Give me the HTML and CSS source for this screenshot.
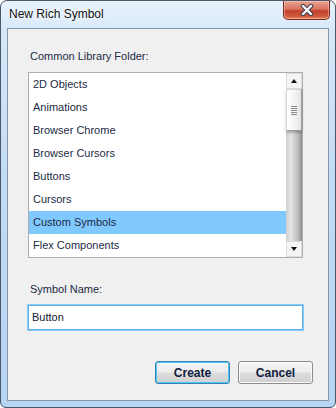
FILE: index.html
```html
<!DOCTYPE html>
<html lang="en">
<head>
    <meta charset="UTF-8">
    <title>New Rich Symbol</title>
    <link rel="stylesheet" href="styles.css">
</head>
<body>
    <div class="window">
        <div class="titlebar">
            <span class="title">New Rich Symbol</span>
            <div class="close">
                <svg width="14" height="12" viewBox="0 0 14 12">
                    <path d="M3 2 L11 10 M11 2 L3 10" stroke="#3b3f52" stroke-width="4.4" stroke-linecap="round"/>
                    <path d="M3 2 L11 10 M11 2 L3 10" stroke="#ffffff" stroke-width="2.4" stroke-linecap="round"/>
                </svg>
            </div>
        </div>

        <div class="client">
            <div class="label">Common Library Folder:</div>

            <div class="listbox">
                <ul class="items">
                    <li>2D Objects</li>
                    <li>Animations</li>
                    <li>Browser Chrome</li>
                    <li>Browser Cursors</li>
                    <li>Buttons</li>
                    <li>Cursors</li>
                    <li class="selected">Custom Symbols</li>
                    <li>Flex Components</li>
                </ul>
                <div class="scrollbar">
                    <div class="arrow"><span class="tri up"></span></div>
                    <div class="thumb">
                        <span class="grip"></span>
                    </div>
                    <div class="track"></div>
                    <div class="arrow"><span class="tri down"></span></div>
                </div>
            </div>

            <div class="label second">Symbol Name:</div>
            <div class="input">Button</div>

            <div class="buttons">
                <button class="btn default">Create</button>
                <button class="btn">Cancel</button>
            </div>
        </div>
    </div>
</body>
</html>
```

FILE: styles.css
```css
body {
    margin: 0;
    width: 336px;
    height: 408px;
    overflow: hidden;
    font-family: 'Liberation Sans', Arial, sans-serif;
    background: #ffffff;
}

.window {
    box-sizing: border-box;
    width: 336px;
    height: 408px;
    border: 1px solid #4b5766;
    border-radius: 7px 7px 6px 6px;
    background: linear-gradient(180deg, #e8f2fc 0%, #d6e8f9 8%, #c4dcf4 40%, #b7d4f2 100%);
    display: flex;
    flex-direction: column;
}

.titlebar {
    height: 27px;
    display: flex;
    align-items: flex-start;
    justify-content: space-between;
}
.title {
    margin: 6px 0 0 8px;
    font-size: 12px;
    line-height: 15px;
    color: #111111;
    text-shadow: 0 0 6px #ffffff, 0 0 3px #ffffff;
}
.close {
    width: 47px;
    height: 19px;
    margin-right: 5px;
    box-sizing: border-box;
    border: 1px solid #7a2a20;
    border-top: none;
    border-radius: 0 0 5px 5px;
    background: linear-gradient(180deg, #e9a493 0%, #d8725f 45%, #c2402a 55%, #d15a3e 85%, #e08a62 100%);
    box-shadow: inset 0 0 0 1px rgba(255, 220, 210, 0.45);
    display: flex;
    align-items: center;
    justify-content: center;
}

.client {
    box-sizing: border-box;
    height: 373px;
    margin: 0 6px 0 6px;
    border: 1px solid #8496aa;
    background: #f0f0f0;
    padding: 20px 0 0 20px;
    color: #1c2a44;
    font-size: 11px;
}

.label {
    padding-left: 2px;
    line-height: 14px;
    height: 14px;
}
.label.second {
    margin-top: 24px;
}

.listbox {
    margin-top: 9px;
    width: 275px;
    height: 186px;
    box-sizing: border-box;
    border: 1px solid #abadb3;
    background: #ffffff;
    display: flex;
}
.items {
    list-style: none;
    margin: 0;
    padding: 0;
    flex: 1;
}
.items li {
    height: 23px;
    line-height: 23px;
    padding-left: 4px;
    white-space: nowrap;
}
.items li.selected {
    background: #80c9ff;
}

.scrollbar {
    width: 16px;
    display: flex;
    flex-direction: column;
    background: linear-gradient(90deg, #cfcfcf 0%, #e6e6e6 30%, #bdbdbd 75%, #8f8f8f 100%);
}
.arrow {
    height: 16px;
    box-sizing: border-box;
    border: 1px solid #dcdcdc;
    background: #f4f4f4;
    display: flex;
    align-items: center;
    justify-content: center;
}
.tri {
    width: 0;
    height: 0;
    border-left: 3.5px solid transparent;
    border-right: 3.5px solid transparent;
}
.tri.up {
    border-bottom: 4px solid #111111;
}
.tri.down {
    border-top: 4px solid #111111;
}
.thumb {
    height: 42px;
    box-sizing: border-box;
    border: 1px solid #9a9a9a;
    border-top-color: #d8d8d8;
    border-left-color: #d8d8d8;
    border-radius: 2px;
    background: linear-gradient(90deg, #ffffff 0%, #f2f2f2 60%, #e4e4e4 100%);
    box-shadow: 0 2px 3px rgba(0, 0, 0, 0.25);
    display: flex;
    align-items: center;
    justify-content: center;
}
.grip {
    width: 6px;
    height: 9px;
    background: repeating-linear-gradient(180deg, #8a8a8a 0, #8a8a8a 1px, transparent 1px, transparent 2px);
}
.track {
    flex: 1;
}

.input {
    margin: 8px 0 0 -1px;
    width: 277px;
    height: 27px;
    box-sizing: border-box;
    border: 2px solid #8ccbf6;
    outline: 1px solid #5fb1ec;
    outline-offset: -2px;
    background: #ffffff;
    padding-left: 3px;
    line-height: 23px;
    color: #0e1a33;
}

.buttons {
    margin-top: 30px;
    padding-right: 15px;
    display: flex;
    justify-content: flex-end;
    gap: 8px;
}
.btn {
    width: 75px;
    height: 23px;
    box-sizing: border-box;
    border: 1px solid #8c8c8c;
    border-radius: 3px;
    background: linear-gradient(180deg, #f6f6f6 0%, #ebebeb 48%, #dddddd 52%, #cfcfcf 100%);
    font-family: 'Liberation Sans', Arial, sans-serif;
    font-size: 12px;
    font-weight: bold;
    color: #102040;
    padding: 0;
    box-shadow: inset 0 0 0 1px #fafafa;
}
.btn.default {
    border-color: #3c7fb1;
    box-shadow: inset 0 0 0 1px #48c8f8;
}
```
